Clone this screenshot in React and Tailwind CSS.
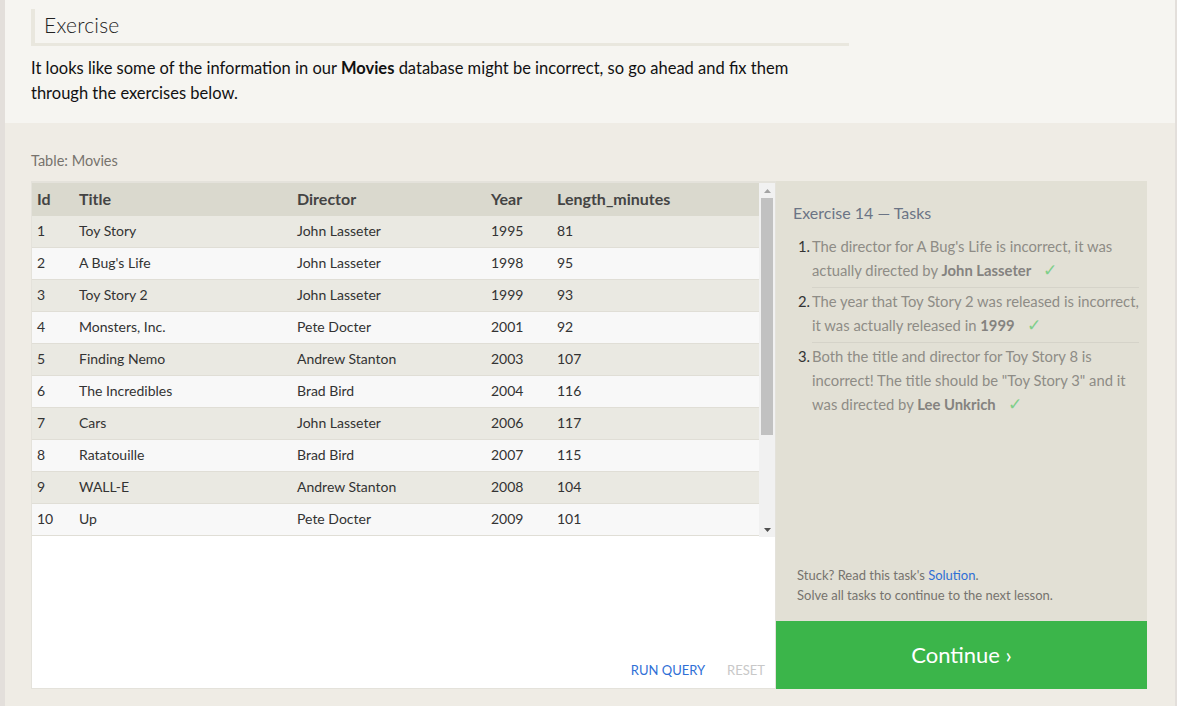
import React from "react";

const rows = [
  [1, "Toy Story", "John Lasseter", 1995, 81],
  [2, "A Bug's Life", "John Lasseter", 1998, 95],
  [3, "Toy Story 2", "John Lasseter", 1999, 93],
  [4, "Monsters, Inc.", "Pete Docter", 2001, 92],
  [5, "Finding Nemo", "Andrew Stanton", 2003, 107],
  [6, "The Incredibles", "Brad Bird", 2004, 116],
  [7, "Cars", "John Lasseter", 2006, 117],
  [8, "Ratatouille", "Brad Bird", 2007, 115],
  [9, "WALL-E", "Andrew Stanton", 2008, 104],
  [10, "Up", "Pete Docter", 2009, 101],
];

const Check = () => <span className="ml-3 text-[17px] font-light text-[#7fcf8a]">✓</span>;

export default function App() {
  return (
    <div
      className="w-[1177px] h-[706px] overflow-hidden flex bg-[#e3dfdb]"
      style={{ fontFamily: "Lato, 'Open Sans', sans-serif" }}
    >
      <div className="w-[5px] shrink-0 bg-[#e3dfdb]" />
      <div className="w-[1170px] flex flex-col">
        {/* top */}
        <div className="bg-[#f6f5f1] h-[123px] pl-[26px] pt-[9px]">
          <div className="w-[818px] h-[37px] border-l-4 border-b-[3px] border-[#e9e7de] pl-[9px] flex items-center">
            <span className="text-[21px] text-[#222] tracking-[0.2px] font-light leading-none -mt-[4px]">Exercise</span>
          </div>
          <p className="mt-[10px] text-[16.5px] leading-[25px] text-[#111] w-[790px]">
            It looks like some of the information in our <b className="font-bold">Movies</b> database might be incorrect, so go ahead and fix them through the exercises below.
          </p>
        </div>
        {/* bottom */}
        <div className="flex-1 bg-[#efece5] pl-[26px] pt-[27px]">
          <div className="text-[14.5px] text-[#77736d] h-[31px] leading-[22px]">Table: Movies</div>
          <div className="flex w-[1116px] h-[508px]">
            <div className="w-[745px] bg-white border border-[#e4e2db] flex flex-col">
              <div className="flex h-[355px] border-t border-[#e4e2db]">
                <div className="flex-1 flex flex-col text-[14px] text-[#333]">
                  <div className="flex items-center h-[33px] pb-[2px] bg-[#dad9ce] font-bold text-[16px] text-[#444]">
                    <div className="w-[47px] pl-[5px]">Id</div>
                    <div className="w-[218px]">Title</div>
                    <div className="w-[194px]">Director</div>
                    <div className="w-[66px]">Year</div>
                    <div className="flex-1">Length_minutes</div>
                  </div>
                  {rows.map((r, i) => (
                    <div
                      key={r[0]}
                      className={
                        "flex items-center h-[32px] pb-[2px] border-b border-[#e0ded6] " +
                        (i % 2 === 0 ? "bg-[#eae9e2]" : "bg-[#f8f8f8]")
                      }
                    >
                      <div className="w-[47px] pl-[5px]">{r[0]}</div>
                      <div className="w-[218px]">{r[1]}</div>
                      <div className="w-[194px]">{r[2]}</div>
                      <div className="w-[66px]">{r[3]}</div>
                      <div className="flex-1">{r[4]}</div>
                    </div>
                  ))}
                </div>
                <div className="w-[16px] bg-[#f1f1f1] flex flex-col items-center">
                  <div className="h-[15px] flex items-center justify-center">
                    <svg width="7" height="4" viewBox="0 0 7 4"><path d="M0 4L3.5 0L7 4Z" fill="#a3a3a3" /></svg>
                  </div>
                  <div className="w-[12px] h-[237px] bg-[#c1c1c1]" />
                  <div className="flex-1" />
                  <div className="h-[15px] flex items-center justify-center">
                    <svg width="7" height="4" viewBox="0 0 7 4"><path d="M0 0L3.5 4L7 0Z" fill="#505050" /></svg>
                  </div>
                </div>
              </div>
              <div className="flex-1 flex items-end justify-end pb-[8px] pr-[10px] gap-[22px] text-[13px]">
                <span className="text-[#2f6fd6]">RUN QUERY</span>
                <span className="text-[#c8c8c8]">RESET</span>
              </div>
            </div>
            <div className="w-[371px] flex flex-col">
              <div className="flex-1 bg-[#e2e0d5] pl-[17px] pr-[2px] pt-[21px] flex flex-col">
                <div className="text-[16px] text-[#6b7485] leading-[22px]">Exercise 14 — Tasks</div>
                <ol className="mt-[10px] text-[14.8px] leading-[24px] text-[#8e8c86]">
                  {[
                    <>The director for A Bug's Life is incorrect, it was actually directed by <b className="font-bold text-[#858380]">John Lasseter</b><Check /></>,
                    <>The year that Toy Story 2 was released is incorrect, it was actually released in <b className="font-bold text-[#858380]">1999</b><Check /></>,
                    <>Both the title and director for Toy Story 8 is incorrect! The title should be "Toy Story 3" and it was directed by <b className="font-bold text-[#858380]">Lee Unkrich</b><Check /></>,
                  ].map((c, i) => (
                    <li key={i} className="flex">
                      <span className="w-[19px] shrink-0 text-right pr-[2px] text-[#333]">{i + 1}.</span>
                      <div className={"flex-1 pb-[5px] mb-[1px] mr-[6px] " + (i < 2 ? "border-b border-[#d5d3c9]" : "")}>{c}</div>
                    </li>
                  ))}
                </ol>
                <div className="flex-1" />
                <div className="text-[13px] leading-[20px] text-[#76736e] pl-[4px] pb-[16px]">
                  <div>Stuck? Read this task's <span className="text-[#2f6fd6]">Solution</span>.</div>
                  <div>Solve all tasks to continue to the next lesson.</div>
                </div>
              </div>
              <div className="h-[68px] bg-[#3bb54a] flex items-center justify-center text-white text-[22px] pb-[2px]">
                Continue ›
              </div>
            </div>
          </div>
        </div>
      </div>
      <div className="w-[2px] shrink-0 bg-[#e3dfdb]" />
    </div>
  );
}
